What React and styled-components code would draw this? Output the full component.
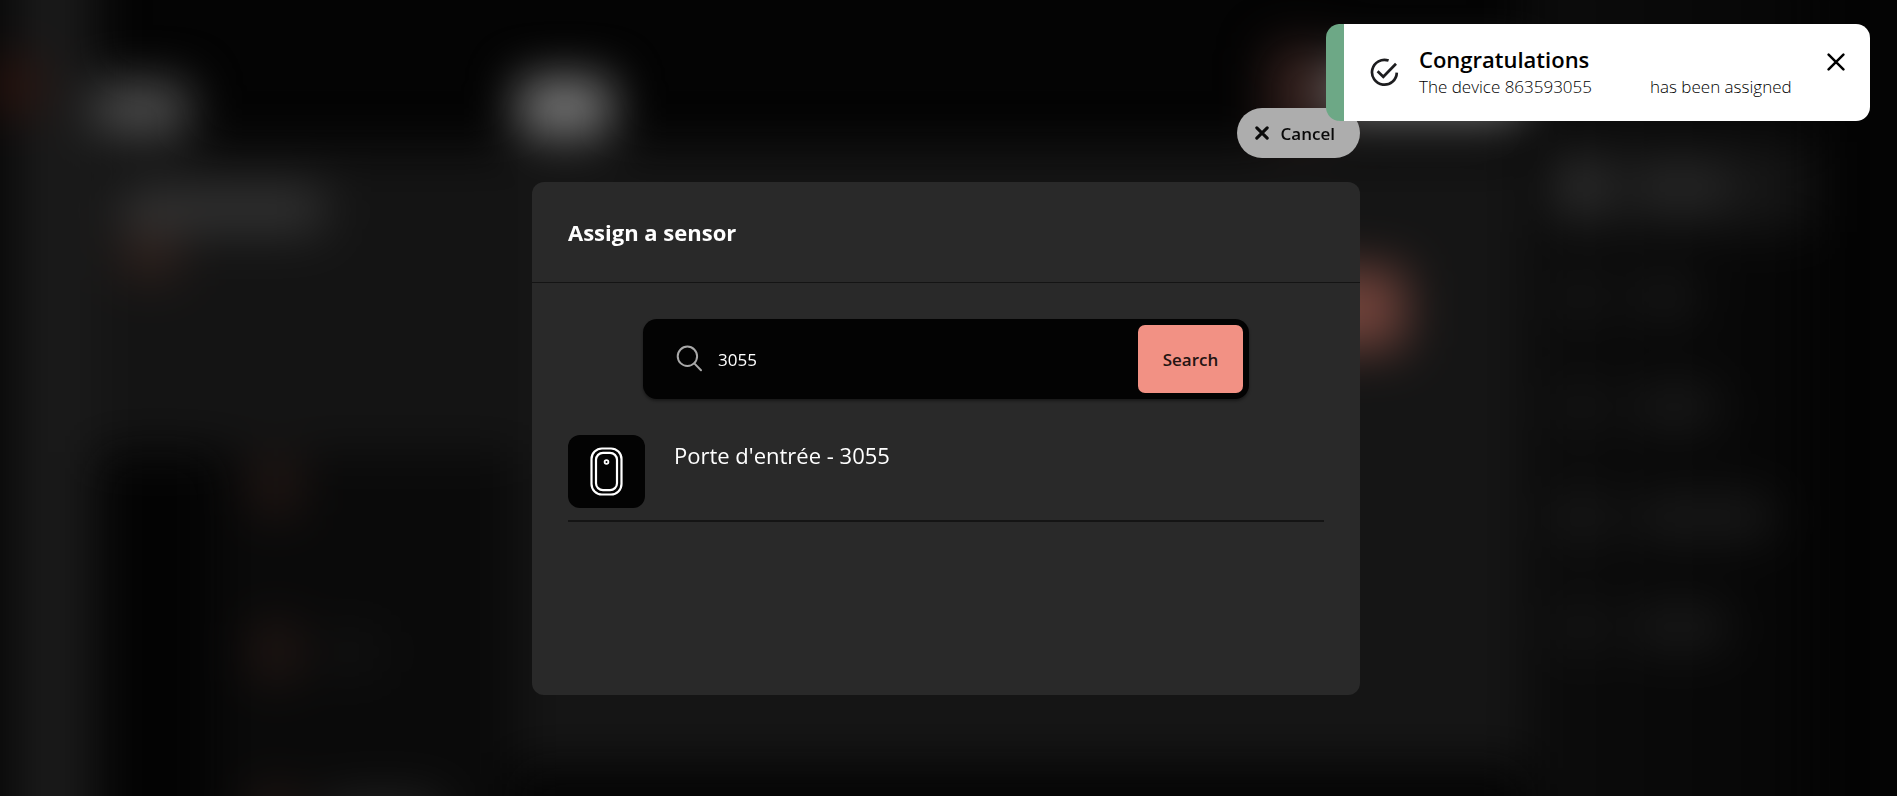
import React, { useState } from 'react';
import styled, { createGlobalStyle } from 'styled-components';

const GlobalStyle = createGlobalStyle`
  *, *::before, *::after { box-sizing: border-box; }
  body {
    margin: 0;
    min-height: 100vh;
    background: #040404;
    color: #fff;
    font-family: "Open Sans", "Noto Sans", sans-serif;
    font-size: 17px;
  }
  button, input { font: inherit; }
`;

/* Dimmed, blurred page behind the dialog. It bleeds 64px past every edge. */
const BackdropClip = styled.div`
  position: fixed;
  inset: 0;
  overflow: hidden;
`;

const BackdropPage = styled.div`
  position: absolute;
  inset: -64px;
  display: flex;
  filter: blur(24px);
`;

const Smudge = styled.div`
  flex: none;
  width: ${(p) => p.$w}px;
  height: ${(p) => p.$h}px;
  border-radius: 12px;
  background: ${(p) => p.$tone};
`;

const Rail = styled.div`
  flex: none;
  width: 160px;
  padding: 122px 0 0 54px;
  background: linear-gradient(90deg, #060606 78px, #1a1a1a 78px);
`;

const SideColumn = styled.div`
  flex: none;
  width: 422px;
  display: flex;
  flex-direction: column;
`;

const TopBar = styled.div`
  height: 212px;
  flex: none;
  display: flex;
  justify-content: ${(p) => (p.$spread ? 'space-between' : 'flex-start')};
  align-items: flex-end;
  padding-bottom: 12px;
`;

const SideCard = styled.div`
  height: 304px;
  flex: none;
  padding: 38px 24px;
  background: #141414;
`;

const SideList = styled.div`
  flex: 1;
  margin-left: 118px;
  padding: 4px 40px;
  display: flex;
  flex-direction: column;
  gap: 106px;
  background: #0a0a0a;
`;

const SideListRow = styled.div`
  display: flex;
  align-items: center;
  gap: 24px;
`;

const MainColumn = styled.div`
  flex: 1;
  min-width: 0;
  display: flex;
  flex-direction: column;
`;

const TopActions = styled.div`
  display: flex;
  align-items: center;
`;

const MainCard = styled.div`
  flex: 1;
  margin-bottom: 92px;
  padding: 120px 118px 0 0;
  display: flex;
  justify-content: flex-end;
  align-items: flex-start;
  background: #151515;
`;

const MenuColumn = styled.div`
  flex: none;
  width: 290px;
  margin-right: 148px;
  padding: 206px 0 0 24px;
  display: flex;
  flex-direction: column;
  gap: 20px;
  background: linear-gradient(90deg, #0c0c0c, #060606);
`;

const MenuItem = styled.div`
  height: 90px;
  display: flex;
  align-items: center;
  gap: 30px;
  padding-left: 16px;
  background: ${(p) => (p.$active ? '#151515' : 'transparent')};
`;

/* Dialog */
const Stage = styled.main`
  position: relative;
  display: flex;
  flex-direction: column;
  align-items: center;
  padding: 108px 5px 40px 0;
`;

const DialogColumn = styled.div`
  width: 828px;
  max-width: 100%;
  display: flex;
  flex-direction: column;
  align-items: flex-end;
  gap: 24px;
`;

const CancelButton = styled.button`
  display: flex;
  align-items: center;
  gap: 12px;
  height: 50px;
  padding: 0 25px 0 18px;
  border: 0;
  border-radius: 25px;
  background: #adadad;
  color: #0a0a0a;
  font-weight: 600;
  cursor: pointer;
`;

const Dialog = styled.section`
  width: 100%;
  min-height: 513px;
  border-radius: 12px;
  background: #292929;
`;

const DialogHeader = styled.header`
  padding: 35px 36px;
  border-bottom: 1px solid #141414;
`;

const DialogTitle = styled.h1`
  margin: 0;
  font-size: 22px;
  line-height: 30px;
  font-weight: 700;
`;

const DialogBody = styled.div`
  padding: 36px;
  display: flex;
  flex-direction: column;
  align-items: center;
  gap: 36px;
`;

const SearchForm = styled.form`
  width: 606px;
  max-width: 100%;
  height: 80px;
  display: flex;
  align-items: center;
  gap: 14px;
  padding: 6px 6px 6px 32px;
  border-radius: 14px;
  background: #030303;
  box-shadow: 0 2px 3px rgba(0, 0, 0, 0.4);
`;

const SearchInput = styled.input`
  flex: 1;
  min-width: 0;
  padding: 2px 0 0;
  border: 0;
  outline: 0;
  background: transparent;
  color: #fff;
  line-height: 26px;
  font-weight: 500;
`;

const SearchButton = styled.button`
  width: 105px;
  align-self: stretch;
  border: 0;
  border-radius: 7px;
  background: #f29184;
  color: #241412;
  font-weight: 600;
  cursor: pointer;
`;

const SensorList = styled.ul`
  width: 100%;
  margin: 0;
  padding: 0;
  list-style: none;
`;

const SensorRow = styled.li`
  display: flex;
  align-items: flex-start;
  gap: 29px;
  padding-bottom: 12px;
  border-bottom: 2px solid #141414;
`;

const SensorThumb = styled.div`
  width: 77px;
  height: 73px;
  display: flex;
  align-items: center;
  justify-content: center;
  border-radius: 12px;
  background: #030303;
`;

const SensorName = styled.span`
  padding-top: 5px;
  font-size: 22px;
  line-height: 30px;
`;

/* Notification */
const Toast = styled.aside`
  position: fixed;
  top: 24px;
  right: 27px;
  width: 544px;
  max-width: calc(100% - 54px);
  display: flex;
  align-items: center;
  gap: 20px;
  padding: 20px 24px 21px 26px;
  border-left: 18px solid #6da886;
  border-radius: 14px;
  background: #fff;
  color: #000;
`;

const ToastText = styled.div`
  flex: 1;
`;

const ToastTitle = styled.h2`
  margin: 0;
  font-size: 22px;
  line-height: 30px;
  font-weight: 600;
`;

const ToastMessage = styled.p`
  margin: 0;
  display: flex;
  gap: 58px;
  line-height: 26px;
  font-weight: 300;
  white-space: nowrap;
`;

const ToastClose = styled.button`
  align-self: flex-start;
  flex: none;
  display: flex;
  padding: 8px 0;
  border: 0;
  background: none;
  color: inherit;
  cursor: pointer;
`;

const CrossIcon = ({ size, weight }) => (
  <svg width={size} height={size} viewBox="0 0 20 20" fill="none" stroke="currentColor" strokeWidth={weight} strokeLinecap="round" aria-hidden="true">
    <path d="M2.6 2.6 17.4 17.4M17.4 2.6 2.6 17.4" />
  </svg>
);

const CheckIcon = () => (
  <svg width="29" height="29" viewBox="0 0 29 29" fill="none" stroke="#1d1d1f" strokeWidth="2.7" aria-hidden="true">
    <path d="M18.6 2.6A12.4 12.4 0 1 0 26.8 14.6" />
    <path d="M7.6 13.2 13.3 18.8 26 5.8" />
  </svg>
);

const SearchIcon = () => (
  <svg width="29" height="29" viewBox="0 0 29 29" fill="none" stroke="#a9a9a9" strokeWidth="2" strokeLinecap="round" aria-hidden="true">
    <circle cx="12.4" cy="11.3" r="9.7" />
    <path d="M19.3 18.4 26 25.2" />
  </svg>
);

const SensorIcon = () => (
  <svg width="33" height="49" viewBox="0 0 33 49" fill="none" stroke="#fff" aria-hidden="true">
    <rect x="1.5" y="1.5" width="30" height="46" rx="10.5" strokeWidth="2.2" />
    <rect x="6" y="5.8" width="21" height="37.4" rx="7" strokeWidth="2.2" />
    <circle cx="16.5" cy="15" r="1.9" strokeWidth="1.8" />
  </svg>
);

const menuItems = [
  { icon: '#343434', tone: '#282828', w: 96 },
  { icon: '#171717', tone: '#181818', w: 62 },
  { icon: '#171717', tone: '#1a1a1a', w: 84 },
  { icon: '#1c1c1c', tone: '#1a1a1a', w: 140 },
  { icon: '#171717', tone: '#1a1a1a', w: 92 },
];

const BlurredPage = () => (
  <BackdropClip aria-hidden="true">
    <BackdropPage>
      <Rail>
        <Smudge $w={50} $h={56} $tone="#2c140f" />
      </Rail>
      <SideColumn>
        <TopBar>
          <Smudge $w={94} $h={54} $tone="#4f4f4f" />
        </TopBar>
        <SideCard>
          <Smudge $w={204} $h={46} $tone="#333" />
          <Smudge $w={60} $h={48} $tone="#2e201c" />
        </SideCard>
        <SideList>
          {[0, 60, 120].map((w) => (
            <SideListRow key={w}>
              <Smudge $w={44} $h={60} $tone="#231714" />
              <Smudge $w={w} $h={44} $tone={w > 60 ? '#222' : '#111'} />
            </SideListRow>
          ))}
        </SideList>
      </SideColumn>
      <MainColumn>
        <TopBar $spread>
          <Smudge $w={94} $h={58} $tone="#7a7a7a" />
          <TopActions>
            <Smudge $w={60} $h={90} $tone="#35201d" />
            <Smudge $w={194} $h={58} $tone="#777" />
          </TopActions>
        </TopBar>
        <MainCard>
          <Smudge $w={104} $h={82} $tone="#70423a" />
        </MainCard>
      </MainColumn>
      <MenuColumn>
        {menuItems.map((item, i) => (
          <MenuItem key={i} $active={i === 0}>
            <Smudge $w={40} $h={50} $tone={item.icon} />
            <Smudge $w={item.w} $h={40} $tone={item.tone} />
          </MenuItem>
        ))}
      </MenuColumn>
    </BackdropPage>
  </BackdropClip>
);

export default function App() {
  const [query, setQuery] = useState('3055');

  return (
    <>
      <GlobalStyle />
      <BlurredPage />
      <Stage>
        <DialogColumn>
          <CancelButton type="button">
            <CrossIcon size={14} weight={4.4} />
            Cancel
          </CancelButton>
          <Dialog role="dialog" aria-labelledby="dialog-title">
            <DialogHeader>
              <DialogTitle id="dialog-title">Assign a sensor</DialogTitle>
            </DialogHeader>
            <DialogBody>
              <SearchForm role="search" onSubmit={(e) => e.preventDefault()}>
                <SearchIcon />
                <SearchInput
                  type="text"
                  aria-label="Search a sensor"
                  value={query}
                  onChange={(e) => setQuery(e.target.value)}
                />
                <SearchButton type="submit">Search</SearchButton>
              </SearchForm>
              <SensorList>
                <SensorRow>
                  <SensorThumb>
                    <SensorIcon />
                  </SensorThumb>
                  <SensorName>Porte d'entrée - 3055</SensorName>
                </SensorRow>
              </SensorList>
            </DialogBody>
          </Dialog>
        </DialogColumn>
      </Stage>
      <Toast role="status">
        <CheckIcon />
        <ToastText>
          <ToastTitle>Congratulations</ToastTitle>
          <ToastMessage>
            <span>The device 863593055</span>
            <span>has been assigned</span>
          </ToastMessage>
        </ToastText>
        <ToastClose type="button" aria-label="Close">
          <CrossIcon size={20} weight={2.5} />
        </ToastClose>
      </Toast>
    </>
  );
}
